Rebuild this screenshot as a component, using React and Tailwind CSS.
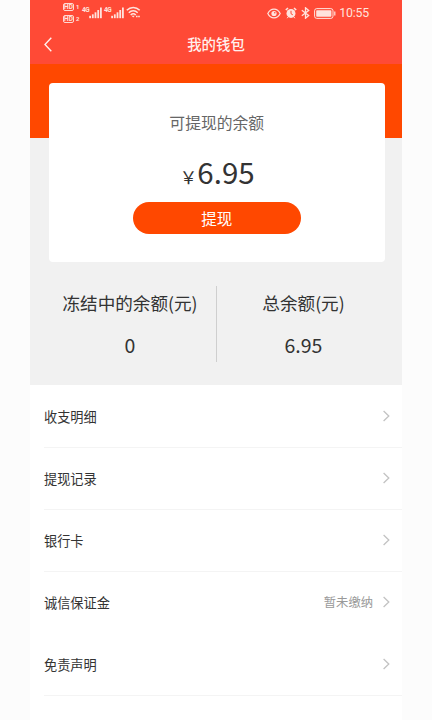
import React from "react";

const menuItems = [
  { label: "收支明细", border: true },
  { label: "提现记录", border: true },
  { label: "银行卡", border: true },
  { label: "诚信保证金", note: "暂未缴纳", border: false },
  { label: "免责声明", border: true },
];

function HdBadge({ sim }) {
  return (
    <div className="flex items-center h-2 gap-[2px]">
      <span className="w-[11px] h-[8px] rounded-[2px] border border-[#ffd9d2] text-[6.5px] leading-[6.5px] font-bold flex justify-center">
        HD
      </span>
      <span className="w-1 text-[6px] leading-[8px] font-bold">{sim}</span>
    </div>
  );
}

function Signal() {
  return (
    <div className="flex w-[20px] h-3">
      <span className="w-[7px] text-[6.5px] leading-[6px] font-bold tracking-[-0.6px]">4G</span>
      <svg className="w-[13px] h-3 shrink-0" viewBox="0 0 13 12" fill="#ffe3dd">
        <rect x="0.2" y="8.8" width="1.8" height="2.4" />
        <rect x="2.9" y="7.3" width="1.8" height="3.9" />
        <rect x="5.6" y="5.3" width="1.8" height="5.9" />
        <rect x="8.3" y="3" width="1.8" height="8.2" />
        <rect x="11" y="0.5" width="1.8" height="10.7" />
      </svg>
    </div>
  );
}

function Wifi() {
  return (
    <svg className="w-[15px] h-3 ml-[2px]" viewBox="0 0 15 12" fill="none" stroke="#ffe3dd" strokeWidth="1.5">
      <path d="M0.8 4.3C4.5 0.4 10 0.4 13.7 4.3" />
      <path d="M2.8 6.8C5.4 4.2 9.1 4.2 11.7 6.8" />
      <path d="M4.7 9C6.3 7.5 8.2 7.5 9.8 9" />
      <path d="M5.6 9.8L7.2 11.6L8.8 9.8Z" fill="#ffe3dd" stroke="none" />
      <path d="M10 10.4H14" strokeDasharray="1.6 0.6" />
    </svg>
  );
}

function StatusBar() {
  return (
    <div className="flex justify-between h-[26px] pl-[33px] pr-[33px] text-[#ffe3dd] font-['Roboto',sans-serif]">
      <div className="flex">
        <div className="flex flex-col gap-1 pt-[3px] w-[19px]">
          <HdBadge sim="1" />
          <HdBadge sim="2" />
        </div>
        <div className="flex gap-[2px] pt-[7px]">
          <Signal />
          <Signal />
        </div>
        <div className="pt-[6px]">
          <Wifi />
        </div>
      </div>

      <div className="flex items-center">
        {/* Eye */}
        <svg className="w-[14px] h-[11px]" viewBox="0 0 14 11" fill="none" stroke="#ffe3dd" strokeWidth="1.2">
          <path d="M0.8 5.5C3.6-0.4 10.4-0.4 13.2 5.5C10.4 11.4 3.6 11.4 0.8 5.5Z" />
          <circle cx="7" cy="5.5" r="2.6" fill="#ffe3dd" stroke="none" />
          <circle cx="7.8" cy="4.8" r="0.8" fill="#ff4a36" stroke="none" />
        </svg>
        {/* Alarm */}
        <svg className="w-3 h-3 ml-1" viewBox="0 0 12 12" fill="none" stroke="#ffe3dd">
          <path d="M0.8 3L3 1M11.2 3L9 1" strokeWidth="1.6" />
          <circle cx="6" cy="6.4" r="4.5" fill="#ffe3dd" stroke="none" />
          <path d="M6 3.8V6.7L7.8 7.8" stroke="#ff4a36" />
          <path d="M3.1 10L2.2 11.2M8.9 10L9.8 11.2" />
        </svg>
        {/* Bluetooth */}
        <svg className="w-[9px] h-3 ml-[4px]" viewBox="0 0 9 12" fill="none" stroke="#ffe3dd" strokeWidth="1.3">
          <path d="M0.8 3.2L7.7 8.6L4.5 11.2V0.8L7.7 3.4L0.8 8.8" />
        </svg>
        {/* Battery */}
        <svg className="w-[22px] h-[11px] ml-1" viewBox="0 0 22 11" fill="none" stroke="#ffe3dd">
          <rect x="0.6" y="0.6" width="18.4" height="9.8" rx="2.2" />
          <rect x="2.2" y="2.2" width="15.2" height="6.6" rx="0.8" fill="#ffe3dd" stroke="none" />
          <path d="M20.8 3.5V7.5" strokeWidth="1.2" />
        </svg>
        <span className="ml-[3px] text-[12.3px] leading-none tracking-[-0.15px]">10:55</span>
      </div>
    </div>
  );
}

function Arrow() {
  return (
    <svg className="w-[7px] h-[12px] mb-px" viewBox="0 0 7 12" fill="none" stroke="#c3c3c3" strokeWidth="1.3">
      <path d="M0.6 1L5.8 6L0.6 11" />
    </svg>
  );
}

export default function App() {
  return (
    <div className="w-[432px] h-[720px] overflow-hidden bg-[#fcfcfc] pl-[30px] pr-[30px] font-['Noto_Sans_CJK_SC',sans-serif] text-[#333]">
      <div className="h-full bg-white">
        {/* Header */}
        <header className="h-16 bg-[#ff4a36]">
          <StatusBar />
          <div className="grid grid-cols-[1fr_auto_1fr] items-center h-9 px-[14px]">
            <svg className="w-2 h-[15px]" viewBox="0 0 8 15" fill="none" stroke="#fff0ed" strokeWidth="1.4">
              <path d="M7.3 0.8L1 7.5L7.3 14.2" />
            </svg>
            <h1 className="text-[14.4px] leading-5 font-medium text-[#fff0ed]">我的钱包</h1>
          </div>
        </header>

        {/* Balance */}
        <section className="h-[321px] bg-[linear-gradient(#ff4800_74px,#f1f1f1_74px)] pt-[19px]">
          <div className="ml-[18.5px] mr-[17px] h-[179px] rounded-[4px] bg-white flex flex-col items-center">
            <p className="mt-[28px] text-[15.8px] leading-6 text-[#666]">可提现的余额</p>
            <p className="mt-[16px] h-10 flex items-baseline leading-10 pl-px">
              <span className="text-[17.5px]">{"\uFFE5"}</span>
              <span className="text-[29.5px]">6.95</span>
            </p>
            <button className="mt-[11px] w-[168px] h-8 rounded-full bg-[#ff4800] text-[15.5px] text-white leading-8">
              提现
            </button>
          </div>

          <div className="flex mt-[24px] h-[76px] text-center leading-6">
            <div className="w-[187px] pl-[14px] border-r border-[#cfcfcf]">
              <p className="mt-[5px] text-[17.6px]">冻结中的余额(元)</p>
              <p className="mt-[18px] text-[19.5px]">0</p>
            </div>
            <div className="flex-1 pr-[12px]">
              <p className="mt-[5px] text-[17.6px]">总余额(元)</p>
              <p className="mt-[18px] text-[19.5px]">6.95</p>
            </div>
          </div>
        </section>

        {/* Menu */}
        <ul className="pl-[14px] pt-px">
          {menuItems.map((item) => (
            <li
              key={item.label}
              className={`flex items-center h-[62px] pr-[12px] border-b ${item.border ? "border-[#f4f4f4]" : "border-transparent"}`}
            >
              <span className="text-[13.2px]">{item.label}</span>
              <span className="ml-auto mr-[10px] text-[12.3px] text-[#999]">{item.note}</span>
              <Arrow />
            </li>
          ))}
        </ul>
      </div>
    </div>
  );
}
